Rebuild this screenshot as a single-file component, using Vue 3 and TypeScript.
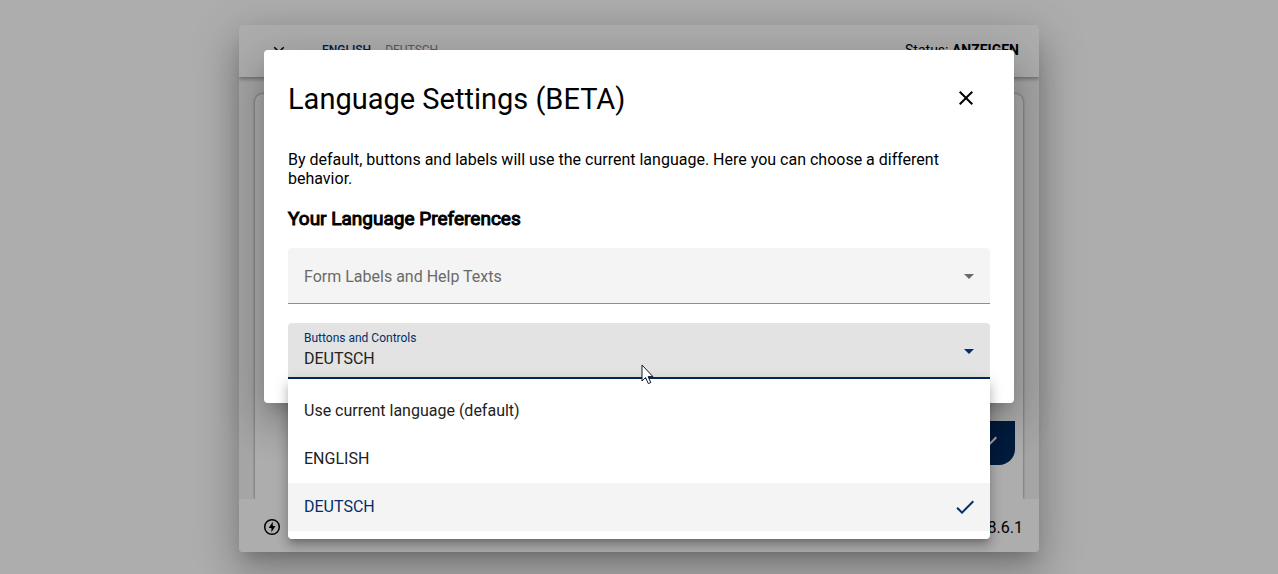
<script setup lang="ts">
import { ref } from 'vue'

const languages = ['Use current language (default)', 'ENGLISH', 'DEUTSCH']
const formLanguage = ref('')
const controlLanguage = ref('DEUTSCH')
const menuOpen = ref(true)

function choose(language: string) {
  controlLanguage.value = language
  menuOpen.value = false
}
</script>

<template>
  <div class="stage">
    <div class="window">
      <header class="bar">
        <button class="icon-button" type="button" aria-label="Close window">
          <svg width="24" height="24" viewBox="0 0 24 24"><path d="M19 6.41 17.59 5 12 10.59 6.41 5 5 6.41 10.59 12 5 17.59 6.41 19 12 13.41 17.59 19 19 17.59 13.41 12z" /></svg>
        </button>
        <nav class="tabs">
          <a class="tab current" href="#english">ENGLISH</a>
          <a class="tab" href="#deutsch">DEUTSCH</a>
        </nav>
        <span class="status">Status: <strong>ANZEIGEN</strong></span>
      </header>
      <main class="content">
        <section class="sheet">
          <button class="confirm" type="button" aria-label="Confirm">
            <svg width="24" height="24" viewBox="0 0 24 24"><path d="M9 16.17 4.83 12l-1.42 1.41L9 19 21 7l-1.41-1.41z" /></svg>
          </button>
        </section>
      </main>
      <footer class="foot">
        <svg width="20" height="20" viewBox="0 0 20 20"><circle cx="9" cy="9" r="7.3" fill="none" stroke="currentColor" stroke-width="1.5" /><path d="M9.8 3.8 5.7 10h2.7v4.3L12.5 8h-2.7z" /></svg>
        <span>8.6.1</span>
      </footer>
    </div>

    <div class="scrim"></div>

    <div class="layer">
      <section class="dialog" role="dialog" aria-modal="true" aria-labelledby="dialog-title">
        <div class="dialog-head">
          <h1 id="dialog-title">Language Settings (BETA)</h1>
          <button class="icon-button" type="button" aria-label="Close">
            <svg width="24" height="24" viewBox="0 0 24 24"><path d="M19 6.41 17.59 5 12 10.59 6.41 5 5 6.41 10.59 12 5 17.59 6.41 19 12 13.41 17.59 19 19 17.59 13.41 12z" /></svg>
          </button>
        </div>
        <p class="intro">By default, buttons and labels will use the current language. Here you can choose a different behavior.</p>
        <h2>Your Language Preferences</h2>

        <div class="field">
          <label for="form-language">Form Labels and Help Texts</label>
          <select id="form-language" v-model="formLanguage">
            <option value=""></option>
            <option v-for="language in languages" :key="language">{{ language }}</option>
          </select>
          <svg class="arrow" width="10" height="5" viewBox="0 0 10 5"><path d="M0 0h10L5 5z" /></svg>
        </div>

        <div class="field active">
          <label for="control-language">Buttons and Controls</label>
          <select id="control-language" v-model="controlLanguage" @mousedown.prevent="menuOpen = !menuOpen">
            <option v-for="language in languages" :key="language">{{ language }}</option>
          </select>
          <svg class="arrow" width="10" height="5" viewBox="0 0 10 5"><path d="M0 0h10L5 5z" /></svg>
          <ul v-if="menuOpen" class="menu" role="listbox" aria-label="Buttons and Controls">
            <li
              v-for="language in languages"
              :key="language"
              role="option"
              :aria-selected="language === controlLanguage"
              :class="{ selected: language === controlLanguage }"
              @click="choose(language)"
            >
              <span>{{ language }}</span>
              <svg v-if="language === controlLanguage" width="24" height="24" viewBox="0 0 24 24"><path d="M9 16.17 4.83 12l-1.42 1.41L9 19 21 7l-1.41-1.41z" /></svg>
            </li>
          </ul>
          <svg class="pointer" width="13" height="21" viewBox="0 0 13 21"><path d="M1 1v16l3.6-3.4 2.7 6 2.5-1.1-2.7-5.9h4.8z" fill="#fff" stroke="#10182a" stroke-width="1" /></svg>
        </div>
      </section>
    </div>
  </div>
</template>

<style>
body {
  margin: 0;
  background: #fff;
}
</style>

<style scoped>
* {
  box-sizing: border-box;
}

.stage {
  position: relative;
  min-height: 100vh;
  padding: 25px 16px 22px;
  display: flex;
  justify-content: center;
  overflow: hidden;
  font-family: Roboto, "Liberation Sans", sans-serif;
  font-size: 16px;
  color: #000;
}

svg {
  display: block;
  fill: currentColor;
}

.window {
  width: 100%;
  max-width: 800px;
  display: flex;
  flex-direction: column;
  border-radius: 4px;
  background: #f4f4f4;
  overflow: hidden;
  box-shadow: 0 11px 15px -7px rgba(0, 0, 0, 0.2), 0 24px 38px 3px rgba(0, 0, 0, 0.14), 0 9px 46px 8px rgba(0, 0, 0, 0.12);
}

.bar {
  height: 52px;
  padding: 0 20px 2px 16px;
  display: flex;
  align-items: center;
  background: #fff;
  box-shadow: 0 2px 4px rgba(0, 0, 0, 0.35);
}

.icon-button {
  width: 48px;
  height: 48px;
  padding: 0;
  display: grid;
  place-items: center;
  border: 0;
  background: none;
  color: inherit;
}

.bar .icon-button {
  padding-top: 4px;
}

.bar .icon-button svg {
  width: 18px;
}

.tabs {
  margin-left: 19px;
  display: flex;
  gap: 14px;
}

.tab {
  font-size: 12px;
  color: #858585;
  text-decoration: none;
}

.tab.current {
  font-weight: 500;
  color: #012f6b;
}

.status {
  margin-left: auto;
  font-size: 14px;
}

.content {
  flex: 1;
  padding: 17px 16px 0;
  display: flex;
}

.sheet {
  flex: 1;
  padding: 0 8px 34px;
  display: flex;
  align-items: flex-end;
  justify-content: flex-end;
  border-radius: 8px 8px 0 0;
  background: #fff;
  box-shadow: 0 0 3px rgba(0, 0, 0, 0.5);
}

.confirm {
  width: 64px;
  height: 44px;
  padding: 0 15px 0 0;
  display: flex;
  align-items: center;
  justify-content: flex-end;
  border: 0;
  border-radius: 0 0 16px 16px;
  background: #002a5c;
  color: #fff;
}

.foot {
  position: relative;
  height: 53px;
  padding: 4px 16px 0 24px;
  display: flex;
  align-items: center;
  justify-content: space-between;
  background: #fff;
}

.scrim {
  position: absolute;
  inset: 0;
  background: rgba(0, 0, 0, 0.32);
}

.layer {
  position: absolute;
  inset: 50px 16px auto;
  display: flex;
  justify-content: center;
}

.dialog {
  width: 100%;
  max-width: 750px;
  padding: 24px;
  border-radius: 4px;
  background: #fff;
  box-shadow: 0 11px 15px -7px rgba(0, 0, 0, 0.2), 0 24px 38px 3px rgba(0, 0, 0, 0.14), 0 9px 46px 8px rgba(0, 0, 0, 0.12);
}

.dialog-head {
  display: flex;
  justify-content: space-between;
  align-items: center;
}

h1 {
  margin: 0;
  padding-top: 2px;
  font-size: 29px;
  font-weight: 400;
}

.intro {
  margin: 28px 0 0;
  line-height: 19px;
}

h2 {
  margin: 20px 0 18px;
  font-size: 19px;
  line-height: 22px;
  font-weight: 400;
  -webkit-text-stroke: 1px currentColor;
}

.field {
  position: relative;
  height: 56px;
  display: grid;
  align-items: center;
  border-bottom: 1px solid #8d8d8d;
  border-radius: 4px 4px 0 0;
  background: #f4f4f4;
  color: #6a6a6a;
}

.field > label,
.field > select,
.field > .arrow {
  grid-area: 1 / 1;
}

.field > label {
  padding: 2px 0 0 16px;
  pointer-events: none;
}

.field > select {
  width: 100%;
  height: 55px;
  padding: 0 48px 0 16px;
  border: 0;
  outline: 0;
  appearance: none;
  background: none;
  font: inherit;
  color: #222;
}

.field > .arrow {
  margin: 2px 16px 0 0;
  justify-self: end;
  pointer-events: none;
}

.field.active {
  margin-top: 19px;
  border-bottom: 2px solid #002a5c;
  background: #e3e3e3;
  color: #012f6b;
}

.active > label {
  align-self: start;
  padding-top: 7px;
  font-size: 12px;
  line-height: 16px;
}

.active > select {
  height: 54px;
  padding-top: 16px;
}

.menu {
  position: absolute;
  z-index: 1;
  top: 56px;
  left: 0;
  right: 0;
  margin: 0;
  padding: 8px 0;
  list-style: none;
  border-radius: 0 0 4px 4px;
  background: #fff;
  color: #222;
  box-shadow: 0 5px 5px -3px rgba(0, 0, 0, 0.2), 0 8px 10px 1px rgba(0, 0, 0, 0.14), 0 3px 14px 2px rgba(0, 0, 0, 0.12);
}

.menu li {
  height: 48px;
  padding: 0 13px 0 16px;
  display: flex;
  align-items: center;
  justify-content: space-between;
}

.menu span {
  padding-bottom: 2px;
}

.menu .selected {
  background: #f4f4f4;
  color: #012f6b;
}

.pointer {
  position: absolute;
  z-index: 2;
  top: 41px;
  left: calc(50% + 2px);
  pointer-events: none;
}
</style>
